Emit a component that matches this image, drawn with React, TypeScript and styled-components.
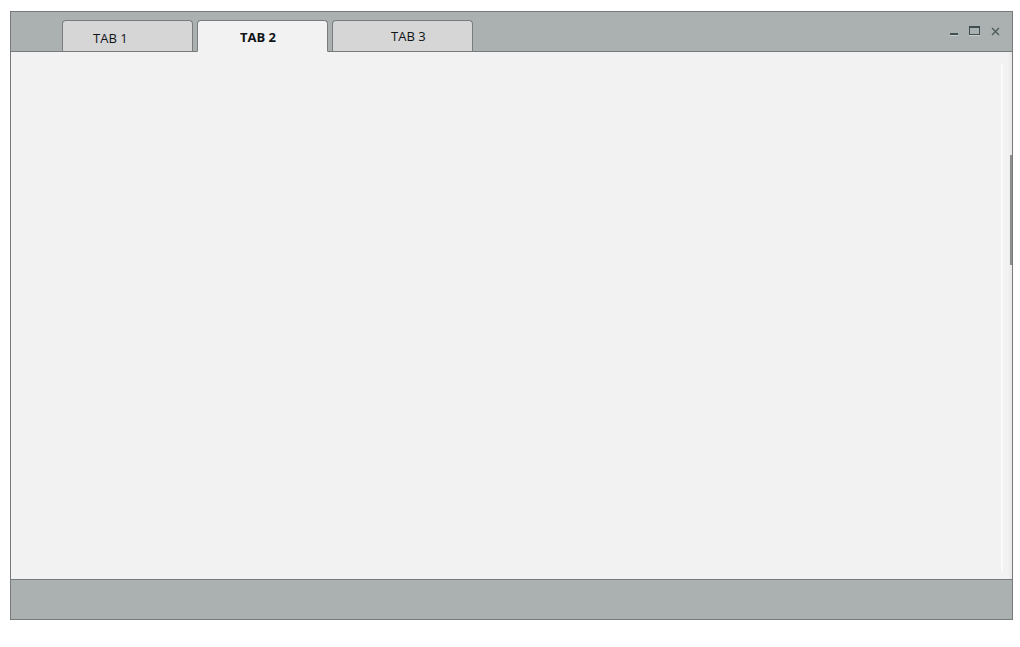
import React from 'react';
import styled, { createGlobalStyle } from 'styled-components';

const GlobalStyle = createGlobalStyle`
  html, body {
    margin: 0;
    padding: 0;
    background: #ffffff;
    font-family: "Open Sans", "Liberation Sans", sans-serif;
  }
`;

const tabs = [
  { label: 'TAB 1', indent: 30, top: 10, width: 131, active: false },
  { label: 'TAB 2', indent: 42, top: 9, width: 131, active: true },
  { label: 'TAB 3', indent: 58, top: 8, width: 141, active: false },
];

const App: React.FC = () => {
  return (
    <Page>
      <GlobalStyle />
      <Window>
        <TitleBar>
          <TabStrip>
            {tabs.map((t) => (
              <Tab
                key={t.label}
                $active={t.active}
                $indent={t.indent}
                $top={t.top}
                $width={t.width}
              >
                {t.label}
              </Tab>
            ))}
          </TabStrip>
          <Controls>
            <CtrlButton aria-label="minimize">
              <svg width="9" height="9" viewBox="0 0 9 9">
                <rect x="0" y="6" width="8" height="2" fill="#3f4f4f" />
                <rect x="0" y="8" width="8" height="1" fill="#c8d0d0" />
              </svg>
            </CtrlButton>
            <CtrlButton aria-label="maximize">
              <svg width="12" height="10" viewBox="0 0 12 10">
                <rect x="0.5" y="0.5" width="10" height="8" fill="none" stroke="#3f4f4f" />
                <rect x="0" y="0" width="11" height="2" fill="#3f4f4f" />
                <rect x="0" y="9" width="11" height="1" fill="#c8d0d0" />
              </svg>
            </CtrlButton>
            <CtrlButton aria-label="close">
              <svg width="9" height="9" viewBox="0 0 9 9">
                <path d="M1 1 L8 8 M8 1 L1 8" stroke="#4a5858" strokeWidth="1.3" />
              </svg>
            </CtrlButton>
          </Controls>
        </TitleBar>
        <Content>
          <ScrollLine />
          <ScrollTrack>
            <ScrollThumb />
          </ScrollTrack>
        </Content>
        <Footer />
      </Window>
    </Page>
  );
};

export default App;

const Page = styled.div`
  width: 1020px;
  height: 647px;
  padding: 11px 0 0 10px;
  box-sizing: border-box;
`;

const Window = styled.div`
  width: 1003px;
  height: 609px;
  box-sizing: border-box;
  border: 1px solid #777a7a;
  display: flex;
  flex-direction: column;
`;

const TitleBar = styled.div`
  height: 40px;
  flex: none;
  background: #abb1b0;
  border-bottom: 1px solid #777a7a;
  box-sizing: border-box;
  display: flex;
  justify-content: space-between;
  align-items: flex-end;
`;

const TabStrip = styled.div`
  display: flex;
  gap: 4px;
  padding-left: 51px;
  margin-bottom: -1px;
`;

const Tab = styled.div<{ $active: boolean; $indent: number; $top: number; $width: number }>`
  width: ${(p) => p.$width}px;
  height: 32px;
  box-sizing: border-box;
  border: 1px solid #7a7d7d;
  border-bottom: ${(p) => (p.$active ? '1px solid #f2f2f2' : '1px solid #777a7a')};
  border-radius: 4px 4px 0 0;
  background: ${(p) => (p.$active ? '#f2f2f2' : '#d6d6d6')};
  padding-left: ${(p) => p.$indent}px;
  padding-top: ${(p) => p.$top}px;
  font-size: 13px;
  line-height: 15px;
  font-weight: ${(p) => (p.$active ? 700 : 400)};
  color: #101418;
`;

const Controls = styled.div`
  display: flex;
  align-items: center;
  gap: 10px;
  padding-right: 12px;
  align-self: flex-start;
  padding-top: 14px;
`;

const CtrlButton = styled.div`
  display: flex;
  align-items: flex-end;
  height: 10px;
`;

const Content = styled.div`
  flex: 1;
  background: #f2f2f2;
  position: relative;
`;

const ScrollLine = styled.div`
  position: absolute;
  left: 990px;
  top: 12px;
  bottom: 8px;
  width: 2px;
  background: #fafafa;
`;

const ScrollTrack = styled.div`
  position: absolute;
  right: 0;
  top: 0;
  bottom: 0;
  width: 3px;
  background: #ececec;
`;

const ScrollThumb = styled.div`
  position: absolute;
  right: 0;
  top: 103px;
  height: 110px;
  width: 2px;
  background: #8d8f8f;
`;

const Footer = styled.div`
  height: 40px;
  flex: none;
  background: #abb1b0;
  border-top: 1px solid #777a7a;
  box-sizing: border-box;
`;
